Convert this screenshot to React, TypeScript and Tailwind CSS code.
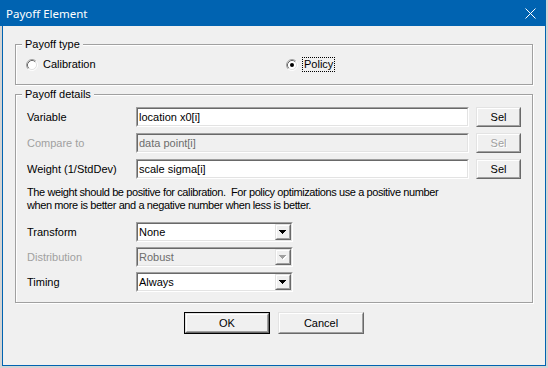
import React from 'react'

// Classic Win32 "Payoff Element" dialog

const sunkenOuter = 'border border-t-[#a0a0a0] border-l-[#a0a0a0] border-r-white border-b-white'
const sunkenInner = 'border border-t-[#696969] border-l-[#696969] border-r-[#e3e3e3] border-b-[#e3e3e3]'
const raisedOuter = 'border border-t-[#e3e3e3] border-l-[#e3e3e3] border-r-[#696969] border-b-[#696969]'
const raisedInner = 'border border-t-white border-l-white border-r-[#a0a0a0] border-b-[#a0a0a0]'

function Radio({ checked }: { checked?: boolean }) {
  return (
    <svg width="12" height="12" viewBox="0 0 12 12" className="shrink-0">
      <circle cx="6" cy="6" r="4.5" fill="#fff" />
      <path d="M2.11 9.89A5.5 5.5 0 0 1 9.89 2.11" fill="none" stroke="#a0a0a0" />
      <path d="M9.89 2.11A5.5 5.5 0 0 1 2.11 9.89" fill="none" stroke="#fff" />
      <path d="M2.82 9.18A4.5 4.5 0 0 1 9.18 2.82" fill="none" stroke="#696969" />
      <path d="M9.18 2.82A4.5 4.5 0 0 1 2.82 9.18" fill="none" stroke="#e3e3e3" />
      {checked && <circle cx="6" cy="6" r="2" fill="#000" />}
    </svg>
  )
}

function GroupBox({ title, height, children }: { title: string; height: string; children: React.ReactNode }) {
  return (
    <div className={`relative w-[518px] border border-[#a0a0a0] shadow-[1px_1px_0_#fff,inset_1px_1px_0_#fff] ${height}`}>
      <span className="absolute -top-[7px] left-[6px] bg-[#f0f0f0] px-[3px] leading-[13px]">{title}</span>
      {children}
    </div>
  )
}

function Arrow({ disabled }: { disabled?: boolean }) {
  const fill = disabled ? '#a0a0a0' : '#000'
  return (
    <svg width="8" height="5" viewBox="0 0 8 5" shapeRendering="crispEdges">
      {disabled && (
        <g fill="#fff">
          <rect x="1" y="1" width="7" height="1" />
          <rect x="2" y="2" width="5" height="1" />
          <rect x="3" y="3" width="3" height="1" />
          <rect x="4" y="4" width="1" height="1" />
        </g>
      )}
      <g fill={fill}>
        <rect x="0" y="0" width="7" height="1" />
        <rect x="1" y="1" width="5" height="1" />
        <rect x="2" y="2" width="3" height="1" />
        <rect x="3" y="3" width="1" height="1" />
      </g>
    </svg>
  )
}

function SelButton({ disabled }: { disabled?: boolean }) {
  return (
    <div className={`ml-[7px] h-full w-[45px] ${raisedOuter}`}>
      <div className={`flex h-full items-center justify-center bg-[#f0f0f0] ${raisedInner} ${disabled ? 'text-[#a0a0a0] [text-shadow:1px_1px_0_#fff]' : ''}`}>
        Sel
      </div>
    </div>
  )
}

function EditRow({ label, value, disabled }: { label: string; value: string; disabled?: boolean }) {
  return (
    <div className="flex h-[20px] items-center">
      <span className={`w-[109px] ${disabled ? 'text-[#a0a0a0]' : ''}`}>{label}</span>
      <div className={`h-full w-[333px] ${sunkenOuter}`}>
        <div className={`flex h-full items-center pl-[1px] ${sunkenInner} ${disabled ? 'bg-[#f0f0f0] text-[#6d6d6d]' : 'bg-white'}`}>
          {value}
        </div>
      </div>
      <SelButton disabled={disabled} />
    </div>
  )
}

function ComboRow({ label, value, disabled }: { label: string; value: string; disabled?: boolean }) {
  return (
    <div className="flex h-[20px] items-center">
      <span className={`w-[109px] ${disabled ? 'text-[#a0a0a0]' : ''}`}>{label}</span>
      <div className={`h-full w-[157px] ${sunkenOuter}`}>
        <div className={`flex h-full items-center ${sunkenInner} ${disabled ? 'bg-[#f0f0f0] text-[#6d6d6d]' : 'bg-white'}`}>
          <span className="flex-1 pl-[1px]">{value}</span>
          <div className={`h-full w-[16px] ${raisedOuter}`}>
            <div className={`flex h-full items-center justify-center bg-[#f0f0f0] ${raisedInner}`}>
              <Arrow disabled={disabled} />
            </div>
          </div>
        </div>
      </div>
    </div>
  )
}

export default function App() {
  return (
    <div className="h-[368px] w-[548px] overflow-hidden bg-[#d4d4d4] font-['Liberation_Sans',Arial,sans-serif] text-[11px] leading-[13px] text-black">
      <div className="flex h-[366px] w-[546px] flex-col">
        {/* Title bar */}
        <div className="flex h-[26px] shrink-0 items-center justify-between bg-[#0063b1] pl-[6px] pr-[10px] font-['Noto_Sans',sans-serif] text-[11.5px] text-white">
          <span>Payoff Element</span>
          <svg width="11" height="11" viewBox="0 0 11 11">
            <path d="M0.5 0.5L10.5 10.5M10.5 0.5L0.5 10.5" stroke="#fff" strokeWidth="1" />
          </svg>
        </div>

        {/* Body */}
        <div className="ml-[2px] flex flex-1 flex-col border-x border-b border-[#0063b1] bg-[#f0f0f0] px-[12px]">
          <div className="mt-[18px]">
            <GroupBox title="Payoff type" height="h-[41px]">
              <div className="flex h-full items-center pl-[10px]">
                <div className="flex w-[260px] items-center gap-[5px]">
                  <Radio />
                  <span>Calibration</span>
                </div>
                <div className="flex items-center gap-[4px]">
                  <Radio checked />
                  <span className="border border-dotted border-black px-[1px]">Policy</span>
                </div>
              </div>
            </GroupBox>
          </div>

          <div className="mt-[9px]">
            <GroupBox title="Payoff details" height="h-[209px]">
              <div className="flex flex-col px-[11px] pt-[12px]">
                <div className="flex flex-col gap-[6px]">
                  <EditRow label="Variable" value="location x0[i]" />
                  <EditRow label="Compare to" value="data point[i]" disabled />
                  <EditRow label="Weight (1/StdDev)" value="scale sigma[i]" />
                </div>
                <p className="mt-[7px] whitespace-pre tracking-[-0.4px]">
                  {'The weight should be positive for calibration.  For policy optimizations use a positive number\nwhen more is better and a negative number when less is better.'}
                </p>
                <div className="mt-[10px] flex flex-col gap-[5px]">
                  <ComboRow label="Transform" value="None" />
                  <ComboRow label="Distribution" value="Robust" disabled />
                  <ComboRow label="Timing" value="Always" />
                </div>
              </div>
            </GroupBox>
          </div>

          <div className="mt-[9px] flex justify-center gap-[8px]">
            <div className="h-[22px] w-[86px] border border-black">
              <div className={`h-full ${raisedOuter}`}>
                <div className={`flex h-full items-center justify-center bg-[#f0f0f0] ${raisedInner}`}>OK</div>
              </div>
            </div>
            <div className={`h-[22px] w-[86px] ${raisedOuter}`}>
              <div className={`flex h-full items-center justify-center bg-[#f0f0f0] ${raisedInner}`}>Cancel</div>
            </div>
          </div>
        </div>
      </div>
    </div>
  )
}
